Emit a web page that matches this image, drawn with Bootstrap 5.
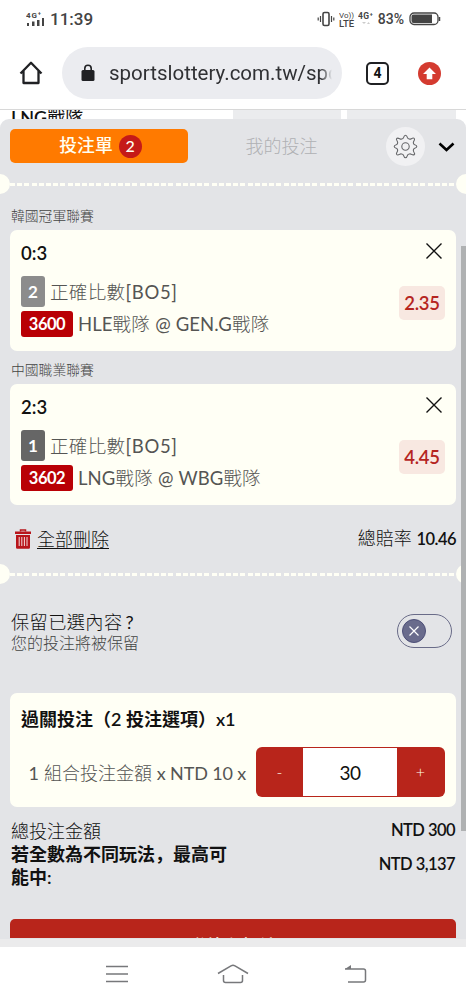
<!DOCTYPE html>
<html lang="zh-Hant">
<head>
<meta charset="utf-8">
<meta name="viewport" content="width=device-width, initial-scale=1">
<title>投注單</title>
<link rel="stylesheet" href="https://cdn.jsdelivr.net/npm/bootstrap@5.3.0/dist/css/bootstrap.min.css">
<style>
html,body{height:1000px;overflow:hidden}
body{font-family:Lato,"Noto Sans CJK TC",sans-serif;font-size:18px;line-height:1;color:#111;background:#fff;white-space:nowrap}
svg{display:block;flex:none}
.fw-lt{font-weight:300}
.lat{font-weight:400;letter-spacing:0}
.status{height:37px;font-family:Roboto,sans-serif;color:#444;padding:0 25px 0 26px}
.clock{font-size:17px;font-weight:500;margin-left:5px;padding-top:1px}
.browser{height:72px;font-family:Roboto,sans-serif;padding:0 25px 0 19px}
.address{width:280px;height:52px;border-radius:26px;background:#ebecf0;margin-left:19px;padding:0 10px 0 19px;font-size:20.5px;color:#303134}
.address span{margin-left:14px;flex:1;overflow:hidden;line-height:30px;-webkit-mask-image:linear-gradient(90deg,#000 95%,transparent)}
.tabs4{width:23px;height:23px;border:2.5px solid #202124;border-radius:5px;font-size:14px;font-weight:700;margin-left:24px}
.behind{height:10px;border-top:1px solid #d8d8d8;overflow:hidden}
.behind .team{width:223px;padding-left:11px;line-height:14px;font-size:18px}
.behind .odd{height:10px;background:#ebecee}
.sheet{height:820px;background:#e3e4e7;border-radius:9px 9px 0 0;overflow:hidden;position:relative}
.tabrow{height:54px;padding:0 10px}
.btn-slip{width:178px;height:34px;border-radius:5px;background:#ff7a00;color:#fffef2;font-weight:500;font-size:17.8px;padding-left:3px}
.count{width:23px;height:23px;border-radius:50%;background:#c51a18;font-size:16px;margin-left:6px}
.mine{width:187px;color:#b0b1b4;text-align:center}
.gear{width:39px;height:39px;border-radius:50%;background:#f1f1f3;margin-left:11px}
.perf{height:22px;overflow:hidden}
.perf i{width:20px;height:20px;border-radius:50%;background:#fffff5;flex:none}
.perf i:first-child{margin-left:-10px}.perf i:last-child{margin-right:-10px}
.perf b{flex:1;height:3px;background:repeating-linear-gradient(90deg,#fffff5 0 5px,transparent 5px 7.2px)}
.league{font-size:13.8px;color:#444;padding-left:11px}
.slip{margin:0 10px;border-radius:7px;background:#fffff5;padding:0 11px;height:121px}
.score{height:46px;font-weight:600;font-size:18.5px}
.tagn{width:24px;height:31px;border-radius:3px;color:#fff;font-weight:700;font-size:17px}
.tagid{width:52px;height:26px;border-radius:3px;background:#b90005;color:#fff;font-weight:700;font-size:16.5px;letter-spacing:-.5px}
.desc{font-size:18.5px;color:#555553;margin-left:5px;letter-spacing:.2px}
.desc .lat{letter-spacing:.1px}
.desc.wide{letter-spacing:.35px;padding-top:2px}
.desc.wide .lat{letter-spacing:.7px}
.price{width:46px;height:34px;border-radius:5px;background:#f8e8e1;color:#b5251f;font-weight:600;font-size:18.5px;letter-spacing:-.3px;margin-top:-7px}
.total{height:58px;padding:9px 10px 0 15px}
.total u{text-underline-offset:2px;text-decoration-thickness:1px;margin-left:6px}
.amt{font-weight:600;font-size:16.5px;letter-spacing:-.55px}
.keep{height:108px;padding:0 14px 0 11px}
.pill{width:55px;height:34px;border:1px solid #696b88;border-radius:17px;padding-left:4px;margin-top:-16px}
.knob{width:24px;height:24px;border-radius:50%;background:#696b8c;border:1px solid #4d4f78}
.stepper{width:189px;height:50px;border-radius:6px;background:#b8251b;padding:1px 0;color:#ffe;font-size:16px}
.stepper .sign{width:47px;text-align:center;font-weight:300}
.stepper .val{width:94px;height:100%;background:#fff;color:#111;font-size:19px;letter-spacing:-.6px}
.sums{padding:0 11px;height:112px}
.submit{height:19px;margin:0 10px;border-radius:5px 5px 0 0;background:#b8251b;color:#ffe;overflow:hidden;text-align:center;font-weight:500;line-height:54px}
.scroller{position:absolute;right:0;top:127px;width:5px;height:585px;background:#afb1b2}
.strip{height:8px;background:#ebebec}
.sysnav{height:53px;padding-left:106px}
</style>
</head>
<body>
<header class="status d-flex align-items-center">
  <svg width="19" height="18" viewBox="0 0 19 18" fill="#444"><text x="0" y="7.500" font-size="8" font-weight="700" textLength="15">4G⁺</text><path d="M1 13h2v3H1zM6 11.500h2.500V16H6zM11 10h2.500v6H11zM16 8h2v8h-2z"/></svg>
  <span class="clock flex-grow-1">11:39</span>
  <svg width="18" height="16" viewBox="0 0 18 16" fill="none" stroke="#444"><rect x="6" y="1.5" width="6" height="13" rx="1.5" stroke-width="1.6"/><path d="M3.500 5v6M1.200 6.500v3M14.500 5v6M16.800 6.500v3" stroke-width="1.2"/></svg>
  <svg class="ms-1" width="17" height="18" viewBox="0 0 17 18" fill="#444"><text x="0" y="8" font-size="8" textLength="15">Vo))</text><text x="0" y="17" font-size="9.500" font-weight="500" textLength="15">LTE</text></svg>
  <svg style="margin-left:2px" width="17" height="18" viewBox="0 0 17 18" fill="#444"><text x="0" y="8.500" font-size="8.500" font-weight="700" textLength="15">4G⁺</text><path d="M4 12h4l-2 2zM9 14h3l-1.500-2z" fill="#ccc"/></svg>
  <span style="font-size:14px;font-weight:500;margin-left:3px;margin-right:1px">83%</span>
  <svg style="margin-left:4px" width="32" height="14" viewBox="0 0 32 14"><rect x="1" y="1" width="28" height="11.500" rx="4" fill="none" stroke="#444" stroke-width="1.300"/><path d="M4.500 2.500H23v8.500H4.500a2 2 0 0 1-2-2v-4.500a2 2 0 0 1 2-2z" fill="#444"/><path d="M30.500 5v4" stroke="#444" stroke-width="1.500"/></svg>
</header>
<nav class="browser d-flex align-items-center">
  <svg width="24" height="24" viewBox="0 0 24 24" fill="none" stroke="#202124" stroke-width="2.300" stroke-linejoin="round"><path d="M1.500 12.500 12 1.800l10.500 10.700M4.500 10v12h15V10"/></svg>
  <div class="address d-flex align-items-center">
    <svg width="14" height="18" viewBox="0 0 14 18"><rect x="0.500" y="6" width="13" height="11" rx="1.500" fill="#202124"/><path d="M3.800 6V4.500a3.200 3.200 0 0 1 6.400 0V6" fill="none" stroke="#202124" stroke-width="1.600"/></svg>
    <span>sportslottery.com.tw/spo</span>
  </div>
  <div class="tabs4 d-flex align-items-center justify-content-center">4</div>
  <svg class="ms-auto" width="23" height="23" viewBox="0 0 23 23"><circle cx="11.500" cy="11.500" r="11.500" fill="#d43b30"/><path d="M11.500 5.500 18 12h-3.700v5.200H8.700V12H5z" fill="#fff"/></svg>
</nav>
<div class="behind d-flex">
  <div class="team"><span style="font-weight:600">LNG</span>戰隊</div><div class="odd" style="width:108px;margin-left:10px"></div><div class="odd" style="width:109px;margin-left:6px"></div>
</div>
<main class="sheet">
  <div class="tabrow d-flex align-items-center">
    <div class="btn-slip d-flex align-items-center justify-content-center">投注單<span class="count d-flex align-items-center justify-content-center">2</span></div>
    <div class="mine fw-lt">我的投注</div>
    <div class="gear d-flex align-items-center justify-content-center"><svg width="25" height="25" viewBox="0 0 25 25" fill="none" stroke="#66676a" stroke-width="1.100" stroke-linejoin="round"><circle cx="12.500" cy="12.500" r="3.700"/><path d="M10.500 3.700Q11.300 1.200 12.500 1.200t2 2.500q.5 1 1.800 1.300 1 .4 2-.3 2.200-1.300 3 -.2t-.6 2.800q-.6 1.200-.2 2.200.4 1 1.300 1.300 2 .6 2 1.700t-2 1.700q-.9.300-1.300 1.300-.4 1 .2 2.200 1.400 2 .6 2.800t-3-.2q-1-.7-2-.3-1.300.3-1.800 1.300-.8 2.500-2 2.500t-2-2.500q-.5-1-1.800-1.300-1-.4-2 .3-2.200 1.300-3 .2t.6-2.800q.6-1.200.2-2.200-.4-1-1.300-1.300-2-.6-2-1.700t2-1.700q.9-.3 1.300-1.300.4-1-.2-2.200-1.400-2-.6-2.800t3 .2q1 .7 2 .3 1.300-.3 1.800-1.300z"/></svg></div>
    <svg style="margin-left:13px;margin-top:2px" width="17" height="10" viewBox="0 0 17 10" fill="none" stroke="#000" stroke-width="2.600"><path d="M1.500 1.500 8.500 8l7-6.500"/></svg>
  </div>
  <div class="perf d-flex align-items-center"><i></i><b></b><i></i></div>
  <div class="league d-flex align-items-center fw-lt" style="height:35px;padding-top:7px">韓國冠軍聯賽</div>
  <section class="slip">
    <div class="score d-flex align-items-center justify-content-between">0:3<svg width="20" height="20" viewBox="0 0 20 20" stroke="#111" stroke-width="1.400" style="margin:-5px 1px 0 0"><path d="M2.500 2.500l15 15M17.500 2.500l-15 15"/></svg></div>
    <div class="d-flex align-items-center justify-content-between"><div>
      <div class="d-flex align-items-center"><span class="tagn d-flex align-items-center justify-content-center" style="background:#8c8c8c">2</span><span class="desc wide fw-lt">正確比數<span class="lat">[BO5]</span></span></div>
      <div class="d-flex align-items-center" style="margin-top:4px"><span class="tagid d-flex align-items-center justify-content-center">3600</span><span class="desc fw-lt"><span class="lat">HLE</span>戰隊 <span class="lat">@ GEN.G</span>戰隊</span></div>
    </div><div class="price d-flex align-items-center justify-content-center">2.35</div></div>
  </section>
  <div class="league d-flex align-items-center fw-lt" style="height:33px;padding-top:5px">中國職業聯賽</div>
  <section class="slip">
    <div class="score d-flex align-items-center justify-content-between">2:3<svg width="20" height="20" viewBox="0 0 20 20" stroke="#111" stroke-width="1.400" style="margin:-5px 1px 0 0"><path d="M2.500 2.500l15 15M17.500 2.500l-15 15"/></svg></div>
    <div class="d-flex align-items-center justify-content-between"><div>
      <div class="d-flex align-items-center"><span class="tagn d-flex align-items-center justify-content-center" style="background:#666">1</span><span class="desc wide fw-lt">正確比數<span class="lat">[BO5]</span></span></div>
      <div class="d-flex align-items-center" style="margin-top:4px"><span class="tagid d-flex align-items-center justify-content-center">3602</span><span class="desc fw-lt"><span class="lat">LNG</span>戰隊 <span class="lat">@ WBG</span>戰隊</span></div>
    </div><div class="price d-flex align-items-center justify-content-center">4.45</div></div>
  </section>
  <div class="total d-flex align-items-center">
    <svg width="16" height="20" viewBox="0 0 16 20"><path d="M5.500 2.500V1h5v1.500" fill="none" stroke="#b8151b" stroke-width="1.500"/><path d="M0 2.500h16v2.600H0zM1 6h14v12.500a1.200 1.200 0 0 1-1.200 1.200H2.200A1.200 1.200 0 0 1 1 18.500z" fill="#b8151b"/><path d="M4.200 8v9M6.800 8v9M9.400 8v9M12 8v9" stroke="#f3dcdc" stroke-width="1"/></svg>
    <u class="fw-lt">全部刪除</u>
    <span class="ms-auto fw-lt">總賠率 <span class="amt">10.46</span></span>
  </div>
  <div class="perf d-flex align-items-center"><i></i><b></b><i></i></div>
  <div class="keep d-flex align-items-center justify-content-between">
    <div style="margin-top:-15px"><div style="line-height:21px;font-size:18.2px;letter-spacing:.4px;font-weight:300">保留已選內容<span class="lat" style="margin-left:3px">?</span></div><div class="fw-lt" style="font-size:16px;line-height:19px;color:#444">您的投注將被保留</div></div>
    <div class="pill d-flex align-items-center"><div class="knob d-flex align-items-center justify-content-center"><svg width="12" height="12" viewBox="0 0 12 12" stroke="#fff" stroke-width="1.200"><path d="M1.500 1.500l9 9M10.500 1.500l-9 9"/></svg></div></div>
  </div>
  <section class="slip" style="height:114px">
    <div class="d-flex align-items-center" style="height:54px;font-weight:600;padding-bottom:3px">過關投注（2 投注選項）x1</div>
    <div class="d-flex align-items-center justify-content-end">
      <span class="fw-lt" style="color:#555553;margin-right:10px;padding-top:2px"><span class="lat">1</span> 組合投注金額 <span class="lat" style="letter-spacing:-.15px">x NTD 10 x</span></span>
      <div class="stepper d-flex align-items-center"><span class="sign">-</span><span class="val d-flex align-items-center justify-content-center">30</span><span class="sign">+</span></div>
    </div>
  </section>
  <div class="sums">
    <div class="d-flex justify-content-between fw-lt" style="padding-top:13px;line-height:23px">總投注金額<span class="amt" style="line-height:20px">NTD 300</span></div>
    <div class="d-flex justify-content-between align-items-center" style="font-weight:600;line-height:23px"><div>若全數為不同玩法<span lang="zh-Hans" style="font-family:'Noto Sans CJK SC',sans-serif;line-height:1">，</span>最高可<br>能中:</div><span class="amt" style="margin-top:-4px">NTD 3,137</span></div>
  </div>
  <div class="submit">聯絡和投注</div>
  <div class="scroller"></div>
</main>
<div class="strip"></div>
<footer class="sysnav d-flex align-items-center">
  <svg width="22" height="18" viewBox="0 0 22 18" stroke="#77787b" stroke-width="1.500"><path d="M0 1.500h22M0 9h22M0 16.500h22"/></svg>
  <svg style="margin-left:89px" width="32" height="20" viewBox="0 0 32 20" fill="none" stroke="#77787b" stroke-width="1.500"><path d="M1 9.500 14 1.800q2-1 4 0l13 7.700M6.500 11v5.500q0 2 2 2h15q2 0 2-2V11"/></svg>
  <svg style="margin-left:95px" width="23" height="20" viewBox="0 0 23 20" fill="none" stroke="#77787b" stroke-width="1.500"><path d="M1 5h18.500q2 0 2 2v9q0 2-2 2H4"/><path d="M7 1v4H1z" fill="#77787b" stroke="none"/></svg>
</footer>
<script src="https://cdn.jsdelivr.net/npm/bootstrap@5.3.0/dist/js/bootstrap.bundle.min.js"></script>
</body>
</html>
